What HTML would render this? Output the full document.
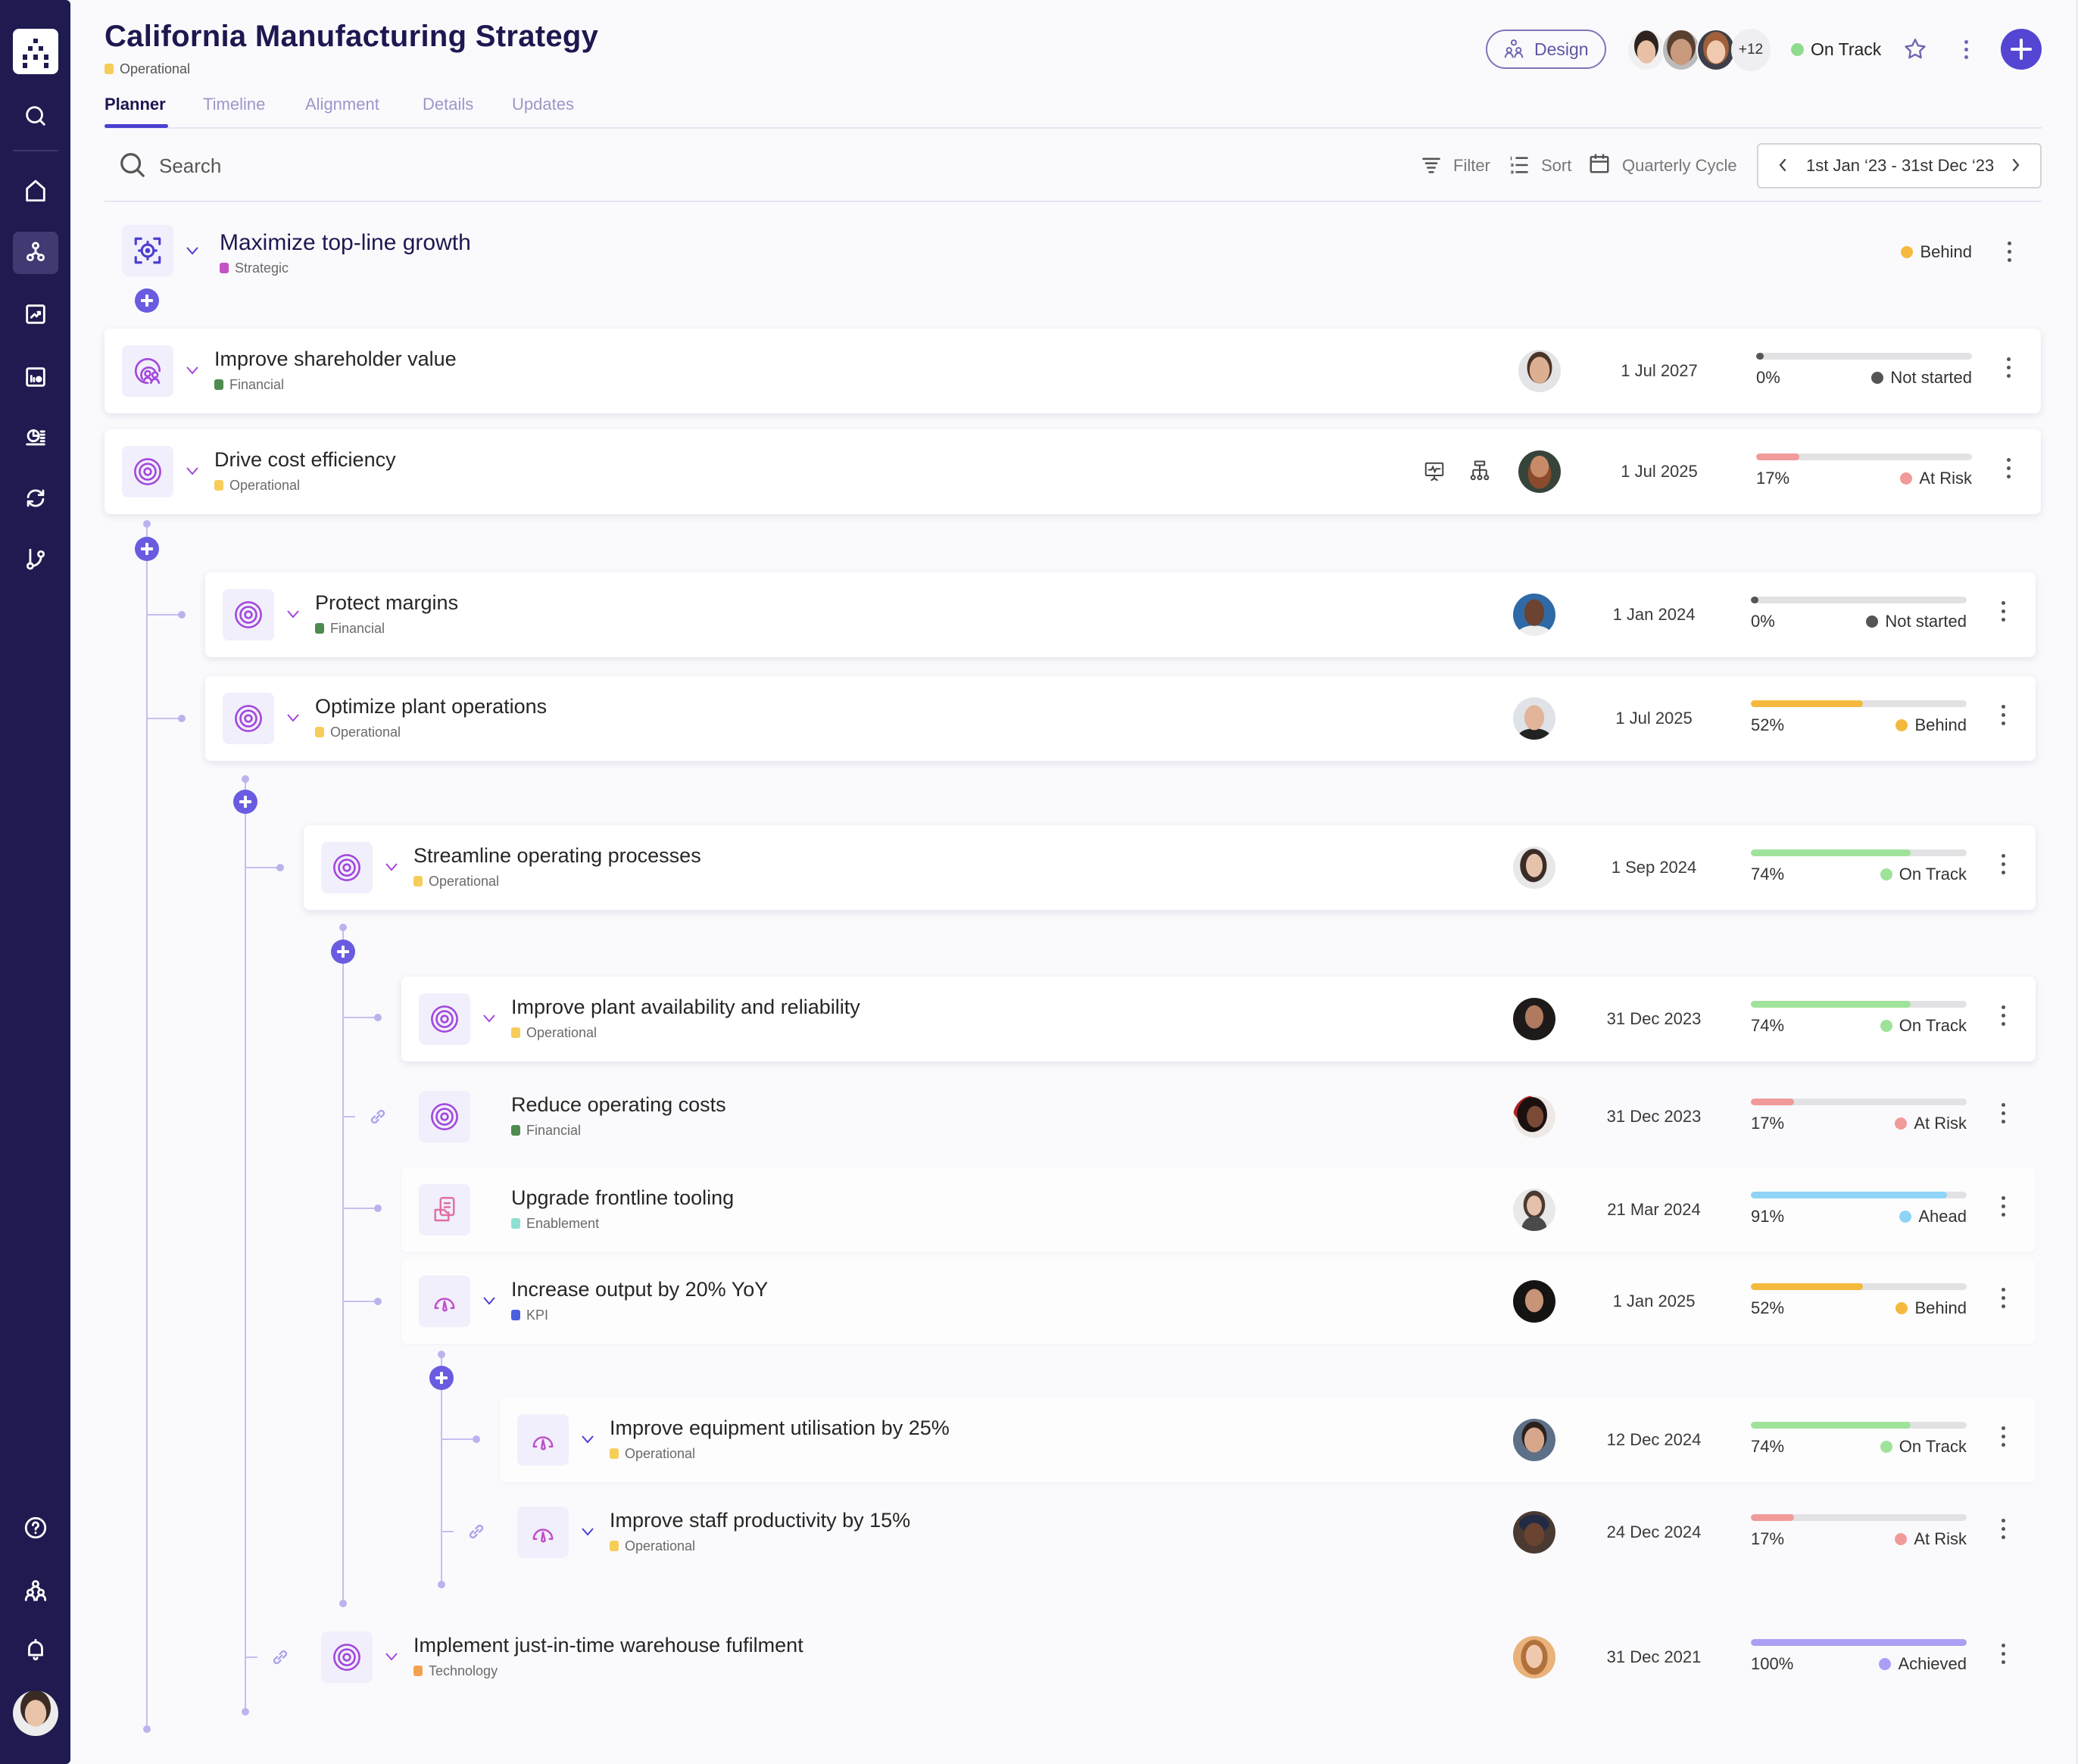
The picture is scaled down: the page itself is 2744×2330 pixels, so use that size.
<!DOCTYPE html>
<html><head><meta charset="utf-8">
<style>
*{box-sizing:border-box;margin:0;padding:0}
body{width:2744px;height:2330px;background:#fafafd;font-family:"Liberation Sans",sans-serif;position:relative;overflow:hidden;color:#2b2b2b}
.abs{position:absolute}
.side{position:absolute;left:0;top:0;width:93px;height:2330px;background:#1f1a4f;border-radius:0 6px 6px 0}
.side svg{position:absolute;left:30px;width:34px;height:34px;fill:none;stroke:#fff;stroke-width:2;stroke-linecap:round;stroke-linejoin:round}
.title{left:138px;top:26px;font-size:40px;font-weight:bold;color:#1d1850;letter-spacing:0.3px}
.tagm{display:inline-block;width:12px;height:14px;border-radius:3px;margin-right:8px;vertical-align:-1px}
.tab{top:125px;font-size:22px;color:#9b97c9}
.row{position:absolute;height:112px}
.card{background:#fff;border-radius:8px;box-shadow:0 3px 10px rgba(30,20,80,.10)}
.faint{background:#fdfdfe;border-radius:8px;box-shadow:0 1px 4px rgba(30,20,80,.04)}
.ib{position:absolute;left:23px;top:22px;width:68px;height:68px;background:#f1effc;border-radius:8px}
.ib svg{position:absolute;left:13px;top:13px;width:42px;height:42px;fill:none;stroke-linecap:round;stroke-linejoin:round}
.chev{position:absolute;left:105px;top:47px;width:22px;height:16px}
.rt{position:absolute;left:145px;top:25px;font-size:27px;color:#262626;white-space:nowrap}
.rg{position:absolute;left:145px;top:64px;font-size:18px;color:#6a6a6a;white-space:nowrap}
.av{position:absolute;top:28px;width:56px;height:56px;border-radius:50%}
.dt{position:absolute;top:43px;width:180px;text-align:center;font-size:22px;color:#3a3a3a}
.pg{position:absolute;top:32px;width:285px;height:60px}
.bar{position:absolute;left:0;top:0;width:285px;height:9px;border-radius:5px;background:#e2e2e4;overflow:hidden}
.bar i{display:block;height:9px;border-radius:5px}
.pc{position:absolute;left:0;top:20px;font-size:22px;color:#333}
.st{position:absolute;right:0;top:20px;font-size:22px;color:#333;white-space:nowrap}
.st b{display:inline-block;width:16px;height:16px;border-radius:50%;margin-right:9px;vertical-align:-1px}
.dots{position:absolute;top:38px;width:8px;height:36px}
.dots i{display:block;width:5px;height:5px;border-radius:50%;background:#555;margin:0 0 6px 1px}
.vl{position:absolute;width:2px;background:#c4bff0}
.hl{position:absolute;height:2px;background:#c4bff0}
.nd{position:absolute;width:10px;height:10px;border-radius:50%;background:#b9b3ee}
.plus{position:absolute;width:32px;height:32px;border-radius:50%;background:#6a5ce0}
.plus:before,.plus:after{content:"";position:absolute;background:#fff;border-radius:1px}
.plus:before{left:8px;top:14px;width:16px;height:4px}
.plus:after{left:14px;top:8px;width:4px;height:16px}
.lk{position:absolute;width:28px;height:28px;fill:none;stroke:#a9a2ea;stroke-width:2;stroke-linecap:round}
</style></head><body>

<div class="side">
  <div class="abs" style="left:17px;top:38px;width:60px;height:60px;background:#fff;border-radius:8px"></div>
  <div class="abs" style="left:44px;top:51px;width:6px;height:6px;background:#1f1a4f"></div>
  <div class="abs" style="left:37px;top:61px;width:6px;height:6px;background:#1f1a4f"></div>
  <div class="abs" style="left:51px;top:61px;width:6px;height:6px;background:#1f1a4f"></div>
  <div class="abs" style="left:30px;top:72px;width:6px;height:7px;background:#1f1a4f"></div>
  <div class="abs" style="left:44px;top:72px;width:6px;height:7px;background:#1f1a4f"></div>
  <div class="abs" style="left:58px;top:72px;width:6px;height:7px;background:#1f1a4f"></div>
  <div class="abs" style="left:30px;top:83px;width:6px;height:7px;background:#1f1a4f"></div>
  <div class="abs" style="left:58px;top:83px;width:6px;height:7px;background:#1f1a4f"></div>
  <div class="abs" style="left:17px;top:198px;width:60px;height:2px;background:#3b3670"></div>
  <div class="abs" style="left:17px;top:306px;width:60px;height:56px;background:#403a73;border-radius:8px"></div>
  <svg style="top:136px" viewBox="0 0 24 24"><circle cx="11" cy="11" r="7"/><path d="M16 16l4 4"/></svg>
  <svg style="top:235px" viewBox="0 0 24 24"><path d="M4 21V10l8-7 8 7v11z"/></svg>
  <svg style="top:316px" viewBox="0 0 24 24"><circle cx="12" cy="6" r="2.5"/><circle cx="7" cy="17" r="2.5"/><circle cx="17" cy="17" r="2.5"/><path d="M12 8.5v4M12 12.5l-4 2.5M12 12.5l4 2.5"/></svg>
  <svg style="top:398px" viewBox="0 0 24 24"><rect x="4" y="4" width="16" height="16" rx="1.5"/><path d="M8 15l3-3 2 2 3-4M14 10h2v2"/></svg>
  <svg style="top:481px" viewBox="0 0 24 24"><rect x="4" y="4" width="16" height="16" rx="1.5"/><path d="M8 11v5M10.5 13v3"/><circle cx="15" cy="14" r="2" fill="#fff"/></svg>
  <svg style="top:560px" viewBox="0 0 24 24"><circle cx="10" cy="11" r="5"/><path d="M10 6v5h5M17 7h3M17 10h3M17 13h3M17 16h3M4 19h16"/></svg>
  <svg style="top:641px" viewBox="0 0 24 24"><path d="M5 11a7 7 0 0 1 12-4l2 2M19 13a7 7 0 0 1-12 4l-2-2M19 5v4h-4M5 19v-4h4"/></svg>
  <svg style="top:722px" viewBox="0 0 24 24"><path d="M7 3v13"/><circle cx="7" cy="18" r="2.5"/><circle cx="17" cy="7" r="2.5"/><path d="M17 9.5c0 5-4 8-7.5 8.5"/></svg>
  <svg style="top:2001px" viewBox="0 0 24 24"><circle cx="12" cy="12" r="9"/><path d="M9.5 9.5a2.5 2.5 0 1 1 3.5 2.3c-.7.4-1 .8-1 1.7M12 16.5v.3"/></svg>
  <svg style="top:2085px" viewBox="0 0 24 24"><circle cx="12" cy="5" r="2.5"/><circle cx="7" cy="13" r="2.5"/><circle cx="17" cy="13" r="2.5"/><path d="M3 20c0-3 2-4.5 4-4.5s4 1.5 4 4.5M13 20c0-3 2-4.5 4-4.5s4 1.5 4 4.5M8 10.5c1-2 2.5-3 4-3s3 1 4 3"/></svg>
  <svg style="top:2162px" viewBox="0 0 24 24"><path d="M6 17V11a6 6 0 0 1 12 0v6H6zM12 5V3M10.5 19.5a1.5 1.5 0 0 0 3 0"/></svg>
  <div class="abs" style="left:17px;top:2233px;width:60px;height:60px;border-radius:50%;background:radial-gradient(ellipse 24% 30% at 50% 50%,#e9c3a8 96%,transparent 100%),radial-gradient(ellipse 34% 40% at 50% 38%,#3a2a24 96%,transparent 100%),#ececec"></div>
</div>

<div class="abs title">California Manufacturing Strategy</div>
<div class="abs" style="left:138px;top:81px;font-size:18px;color:#555"><span class="tagm" style="background:#f7cd5a"></span>Operational</div>
<div class="abs tab" style="left:138px;color:#1d1850;font-weight:bold">Planner</div>
<div class="abs tab" style="left:268px">Timeline</div>
<div class="abs tab" style="left:403px">Alignment</div>
<div class="abs tab" style="left:558px">Details</div>
<div class="abs tab" style="left:676px">Updates</div>
<div class="abs" style="left:138px;top:168px;width:2558px;height:2px;background:#e6e4f2"></div>
<div class="abs" style="left:138px;top:164px;width:84px;height:5px;background:#4b3fd0;border-radius:3px"></div>

<div class="abs" style="left:1962px;top:39px;width:159px;height:52px;border:2px solid #7d76b8;border-radius:26px"></div>
<svg class="abs" style="left:1984px;top:50px;width:30px;height:30px;fill:none;stroke:#6e67b0;stroke-width:1.6" viewBox="0 0 24 24"><circle cx="12" cy="5" r="2.5"/><circle cx="7" cy="13" r="2.5"/><circle cx="17" cy="13" r="2.5"/><path d="M3 21c0-3 2-5 4-5s4 2 4 5M13 21c0-3 2-5 4-5s4 2 4 5"/></svg>
<div class="abs" style="left:2026px;top:52px;font-size:23px;color:#5d56a0">Design</div>
<div class="abs" style="left:2148px;top:38px;width:52px;height:56px;border-radius:50%;background:radial-gradient(ellipse 26% 30% at 50% 55%,#e7c0a6 96%,transparent 100%),radial-gradient(ellipse 34% 40% at 50% 40%,#2d221d 96%,transparent 100%),#f0f0f0;border:2px solid #fafafd"></div>
<div class="abs" style="left:2194px;top:38px;width:52px;height:56px;border-radius:50%;background:radial-gradient(ellipse 30% 34% at 50% 55%,#c99a7e 96%,transparent 100%),radial-gradient(ellipse 40% 44% at 50% 42%,#5a4030 96%,transparent 100%),#bbb;border:2px solid #fafafd"></div>
<div class="abs" style="left:2240px;top:38px;width:52px;height:56px;border-radius:50%;background:radial-gradient(ellipse 26% 30% at 50% 55%,#f0c9b0 96%,transparent 100%),radial-gradient(ellipse 36% 42% at 50% 45%,#a0603a 96%,transparent 100%),#3c3f4a;border:2px solid #fafafd"></div>
<div class="abs" style="left:2286px;top:38px;width:52px;height:56px;border-radius:50%;background:#efeff2;font-size:19px;color:#333;text-align:center;line-height:56px">+12</div>
<div class="abs" style="left:2365px;top:57px;width:17px;height:17px;border-radius:50%;background:#8fdc8f"></div>
<div class="abs" style="left:2391px;top:52px;font-size:23px;color:#222">On Track</div>
<svg class="abs" style="left:2512px;top:48px;width:34px;height:34px;fill:none;stroke:#6e67b0;stroke-width:1.7;stroke-linejoin:round" viewBox="0 0 24 24"><path d="M12 3l2.7 5.6 6.1.9-4.4 4.3 1 6.1L12 17l-5.4 2.9 1-6.1-4.4-4.3 6.1-.9z"/></svg>
<div class="abs" style="left:2594px;top:53px"><div style="width:5px;height:5px;border-radius:50%;background:#6e67b0;margin-bottom:5px"></div><div style="width:5px;height:5px;border-radius:50%;background:#6e67b0;margin-bottom:5px"></div><div style="width:5px;height:5px;border-radius:50%;background:#6e67b0"></div></div>
<div class="abs" style="left:2642px;top:38px;width:54px;height:54px;border-radius:50%;background:#5446d3"></div>
<div class="abs" style="left:2655px;top:63px;width:28px;height:4px;background:#fff;border-radius:2px"></div>
<div class="abs" style="left:2667px;top:51px;width:4px;height:28px;background:#fff;border-radius:2px"></div>

<svg class="abs" style="left:156px;top:198px;width:38px;height:40px;fill:none;stroke:#555;stroke-width:2" viewBox="0 0 24 24"><circle cx="10.5" cy="10.5" r="7.5"/><path d="M16 16l5 5" stroke-linecap="round"/></svg>
<div class="abs" style="left:210px;top:204px;font-size:26px;color:#555">Search</div>
<svg class="abs" style="left:1876px;top:204px;width:28px;height:28px;fill:none;stroke:#555;stroke-width:2.2;stroke-linecap:round" viewBox="0 0 24 24"><path d="M3 5h18M6 10h12M8 15h8M10 20h4"/></svg>
<div class="abs" style="left:1919px;top:206px;font-size:22px;color:#777">Filter</div>
<svg class="abs" style="left:1992px;top:203px;width:28px;height:30px;fill:none;stroke:#555;stroke-width:2.2;stroke-linecap:round" viewBox="0 0 24 24"><path d="M9 4h12M9 12h12M9 20h12" /><path d="M3 3v3M3 11h2v2H3M3 19h2v2H3" stroke-width="1.2"/></svg>
<div class="abs" style="left:2035px;top:206px;font-size:22px;color:#777">Sort</div>
<svg class="abs" style="left:2097px;top:200px;width:30px;height:32px;fill:none;stroke:#555;stroke-width:2" viewBox="0 0 24 24"><rect x="3" y="5" width="18" height="16" rx="1"/><path d="M3 10h18M8 2v5M16 2v5"/></svg>
<div class="abs" style="left:2142px;top:206px;font-size:22px;color:#777">Quarterly Cycle</div>
<div class="abs" style="left:2320px;top:189px;width:376px;height:60px;border:2px solid #d4d4d8;border-radius:6px;background:#fff"></div>
<svg class="abs" style="left:2344px;top:206px;width:20px;height:24px;fill:none;stroke:#444;stroke-width:2.2;stroke-linecap:round" viewBox="0 0 12 24"><path d="M9 5l-6 7 6 7"/></svg>
<div class="abs" style="left:2385px;top:206px;font-size:22px;color:#333">1st Jan ‘23 - 31st Dec ‘23</div>
<svg class="abs" style="left:2652px;top:206px;width:20px;height:24px;fill:none;stroke:#444;stroke-width:2.2;stroke-linecap:round" viewBox="0 0 12 24"><path d="M3 5l6 7-6 7"/></svg>
<div class="abs" style="left:138px;top:265px;width:2558px;height:2px;background:#e6e4f2"></div>

<div class="vl" style="left:193px;top:691px;height:1593px"></div><div class="nd" style="left:189px;top:2279px"></div><div class="nd" style="left:189px;top:687px"></div>
<div class="vl" style="left:323px;top:1029px;height:1232px"></div><div class="nd" style="left:319px;top:2256px"></div><div class="nd" style="left:319px;top:1024px"></div>
<div class="vl" style="left:452px;top:1225px;height:893px"></div><div class="nd" style="left:448px;top:2113px"></div><div class="nd" style="left:448px;top:1220px"></div>
<div class="vl" style="left:582px;top:1789px;height:304px"></div><div class="nd" style="left:578px;top:2088px"></div><div class="nd" style="left:578px;top:1784px"></div>
<div class="plus" style="left:178px;top:381px"></div>
<div class="plus" style="left:178px;top:709px"></div>
<div class="plus" style="left:308px;top:1043px"></div>
<div class="plus" style="left:437px;top:1241px"></div>
<div class="plus" style="left:567px;top:1804px"></div>
<div class="hl" style="left:194px;top:811px;width:45px"></div><div class="nd" style="left:235px;top:807px"></div>
<div class="hl" style="left:194px;top:948px;width:45px"></div><div class="nd" style="left:235px;top:944px"></div>
<div class="hl" style="left:324px;top:1145px;width:45px"></div><div class="nd" style="left:365px;top:1141px"></div>
<div class="hl" style="left:453px;top:1343px;width:45px"></div><div class="nd" style="left:494px;top:1339px"></div>
<div class="hl" style="left:453px;top:1474px;width:16px"></div>
<svg class="lk" style="left:485px;top:1461px" viewBox="0 0 24 24"><path d="M10 14l4-4M8.5 11.5l-3 3a3 3 0 0 0 4 4l3-3M15.5 12.5l3-3a3 3 0 0 0-4-4l-3 3"/></svg>
<div class="hl" style="left:453px;top:1595px;width:45px"></div><div class="nd" style="left:494px;top:1591px"></div>
<div class="hl" style="left:453px;top:1718px;width:45px"></div><div class="nd" style="left:494px;top:1714px"></div>
<div class="hl" style="left:583px;top:1900px;width:45px"></div><div class="nd" style="left:624px;top:1896px"></div>
<div class="hl" style="left:583px;top:2022px;width:16px"></div>
<svg class="lk" style="left:615px;top:2009px" viewBox="0 0 24 24"><path d="M10 14l4-4M8.5 11.5l-3 3a3 3 0 0 0 4 4l3-3M15.5 12.5l3-3a3 3 0 0 0-4-4l-3 3"/></svg>
<div class="hl" style="left:324px;top:2188px;width:16px"></div>
<svg class="lk" style="left:356px;top:2175px" viewBox="0 0 24 24"><path d="M10 14l4-4M8.5 11.5l-3 3a3 3 0 0 0 4 4l3-3M15.5 12.5l3-3a3 3 0 0 0-4-4l-3 3"/></svg>

<div class="row" style="left:138px;top:275px;width:2557px">
  <div class="ib"><svg viewBox="0 0 24 24" stroke="#4b3fd0" stroke-width="1.8"><path d="M3 7V3h4M17 3h4v4M21 17v4h-4M7 21H3v-4"/><circle cx="12" cy="12" r="4.5"/><circle cx="12" cy="12" r="1" fill="#4b3fd0"/><path d="M12 5.5v2M12 16.5v2M5.5 12h2M16.5 12h2"/></svg></div>
  <svg class="chev" style="top:48px" viewBox="0 0 22 16" fill="none" stroke="#4b3fd0" stroke-width="2"><path d="M4 4l7 8 7-8"/></svg>
  <div class="rt" style="left:152px;top:29px;font-size:30px;color:#1d1850">Maximize top-line growth</div>
  <div class="rg" style="left:152px;top:69px"><span class="tagm" style="background:#c553c6"></span>Strategic</div>
  <div class="st" style="right:91px;top:45px;font-size:22px;color:#333"><b style="background:#f4b93d"></b>Behind</div>
  <div class="dots" style="right:37px;top:44px"><i></i><i></i><i></i></div>
</div>

<div class="row card" style="left:138px;top:434px;width:2557px">
  <div class="ib"><svg viewBox="0 0 24 24" stroke="#a347dc" stroke-width="1.5"><path d="M12 21a9 9 0 1 1 9-9"/><path d="M8 18a5.5 5.5 0 1 1 9.5-6"/><circle cx="12" cy="14" r="2"/><circle cx="17.5" cy="15" r="2"/><path d="M9 20c.5-2 1.5-3 3-3s2.5 1 3 3M14.5 21c.5-2 1.5-3 3-3s2.5 1 3 3"/></svg></div>
  <svg class="chev" viewBox="0 0 22 16" fill="none" stroke="#a347dc" stroke-width="2"><path d="M4 4l7 8 7-8"/></svg>
  <div class="rt">Improve shareholder value</div>
  <div class="rg"><span class="tagm" style="background:#4f8a4f"></span>Financial</div>
  <div class="av" style="right:634px;background:radial-gradient(ellipse 24% 32% at 50% 48%,#dcae92 96%,transparent 100%),radial-gradient(ellipse 30% 38% at 50% 42%,#4a3428 96%,transparent 100%),#e4e4e6"></div>
  <div class="dt" style="right:414px">1 Jul 2027</div>
  <div class="pg" style="right:91px"><div class="bar"><i style="width:10px;background:#555"></i></div><div class="pc">0%</div><div class="st"><b style="background:#555"></b>Not started</div></div>
  <div class="dots" style="right:38px"><i></i><i></i><i></i></div>
</div>

<div class="row card" style="left:138px;top:567px;width:2557px">
  <div class="ib"><svg viewBox="0 0 24 24" stroke="#a347dc" stroke-width="1.5"><circle cx="12" cy="12" r="9.5"/><circle cx="12" cy="12" r="6"/><circle cx="12" cy="12" r="2.5"/></svg></div>
  <svg class="chev" viewBox="0 0 22 16" fill="none" stroke="#a347dc" stroke-width="2"><path d="M4 4l7 8 7-8"/></svg>
  <div class="rt">Drive cost efficiency</div>
  <div class="rg"><span class="tagm" style="background:#f7cd5a"></span>Operational</div>
  <svg class="abs" style="right:786px;top:40px;width:30px;height:32px;fill:none;stroke:#444;stroke-width:1.6;stroke-linecap:round" viewBox="0 0 24 24"><rect x="3" y="3" width="18" height="13" rx="1"/><path d="M6 10h3l1.5-3 2 5 1.5-3h4M12 16v3M9 21l3-2 3 2"/></svg>
  <svg class="abs" style="right:726px;top:38px;width:30px;height:34px;fill:none;stroke:#444;stroke-width:1.6" viewBox="0 0 24 24"><rect x="7" y="2" width="10" height="4" rx=".5"/><path d="M12 6v5M5 11h14M5 11v6M12 11v6M19 11v6"/><circle cx="5" cy="19" r="2"/><circle cx="12" cy="19" r="2"/><circle cx="19" cy="19" r="2"/></svg>
  <div class="av" style="right:634px;background:radial-gradient(ellipse 22% 26% at 50% 38%,#c88b6a 96%,transparent 100%),radial-gradient(ellipse 28% 36% at 50% 55%,#8a4a2c 96%,transparent 100%),#36443a"></div>
  <div class="dt" style="right:414px">1 Jul 2025</div>
  <div class="pg" style="right:91px"><div class="bar"><i style="width:57px;background:#f19a9a"></i></div><div class="pc">17%</div><div class="st"><b style="background:#f19a9a"></b>At Risk</div></div>
  <div class="dots" style="right:38px"><i></i><i></i><i></i></div>
</div>

<div class="row card" style="left:271px;top:756px;width:2417px">
  <div class="ib"><svg viewBox="0 0 24 24" stroke="#a347dc" stroke-width="1.5"><circle cx="12" cy="12" r="9.5"/><circle cx="12" cy="12" r="6"/><circle cx="12" cy="12" r="2.5"/></svg></div>
  <svg class="chev" viewBox="0 0 22 16" fill="none" stroke="#a347dc" stroke-width="2"><path d="M4 4l7 8 7-8"/></svg>
  <div class="rt">Protect margins</div>
  <div class="rg"><span class="tagm" style="background:#4f8a4f"></span>Financial</div>
  <div class="av" style="right:634px;background:radial-gradient(ellipse 24% 32% at 50% 45%,#6b4330 96%,transparent 100%),radial-gradient(ellipse 40% 20% at 50% 95%,#eee 96%,transparent 100%),#2f6aa6"></div>
  <div class="dt" style="right:414px">1 Jan 2024</div>
  <div class="pg" style="right:91px"><div class="bar"><i style="width:10px;background:#555"></i></div><div class="pc">0%</div><div class="st"><b style="background:#555"></b>Not started</div></div>
  <div class="dots" style="right:38px"><i></i><i></i><i></i></div>
</div>

<div class="row card" style="left:271px;top:893px;width:2417px">
  <div class="ib"><svg viewBox="0 0 24 24" stroke="#a347dc" stroke-width="1.5"><circle cx="12" cy="12" r="9.5"/><circle cx="12" cy="12" r="6"/><circle cx="12" cy="12" r="2.5"/></svg></div>
  <svg class="chev" viewBox="0 0 22 16" fill="none" stroke="#a347dc" stroke-width="2"><path d="M4 4l7 8 7-8"/></svg>
  <div class="rt">Optimize plant operations</div>
  <div class="rg"><span class="tagm" style="background:#f7cd5a"></span>Operational</div>
  <div class="av" style="right:634px;background:radial-gradient(ellipse 24% 30% at 50% 48%,#e2b49a 96%,transparent 100%),radial-gradient(ellipse 40% 22% at 50% 95%,#222 96%,transparent 100%),#dfe3e8"></div>
  <div class="dt" style="right:414px">1 Jul 2025</div>
  <div class="pg" style="right:91px"><div class="bar"><i style="width:148px;background:#f4b93d"></i></div><div class="pc">52%</div><div class="st"><b style="background:#f4b93d"></b>Behind</div></div>
  <div class="dots" style="right:38px"><i></i><i></i><i></i></div>
</div>

<div class="row card" style="left:401px;top:1090px;width:2287px">
  <div class="ib"><svg viewBox="0 0 24 24" stroke="#a347dc" stroke-width="1.5"><circle cx="12" cy="12" r="9.5"/><circle cx="12" cy="12" r="6"/><circle cx="12" cy="12" r="2.5"/></svg></div>
  <svg class="chev" viewBox="0 0 22 16" fill="none" stroke="#a347dc" stroke-width="2"><path d="M4 4l7 8 7-8"/></svg>
  <div class="rt">Streamline operating processes</div>
  <div class="rg"><span class="tagm" style="background:#f7cd5a"></span>Operational</div>
  <div class="av" style="right:634px;background:radial-gradient(ellipse 20% 28% at 50% 45%,#e6c2aa 96%,transparent 100%),radial-gradient(ellipse 32% 40% at 48% 45%,#3a2c26 96%,transparent 100%),#e8e8e8"></div>
  <div class="dt" style="right:414px">1 Sep 2024</div>
  <div class="pg" style="right:91px"><div class="bar"><i style="width:211px;background:#9fe29a"></i></div><div class="pc">74%</div><div class="st"><b style="background:#9fe29a"></b>On Track</div></div>
  <div class="dots" style="right:38px"><i></i><i></i><i></i></div>
</div>

<div class="row card" style="left:530px;top:1290px;width:2158px">
  <div class="ib"><svg viewBox="0 0 24 24" stroke="#a347dc" stroke-width="1.5"><circle cx="12" cy="12" r="9.5"/><circle cx="12" cy="12" r="6"/><circle cx="12" cy="12" r="2.5"/></svg></div>
  <svg class="chev" viewBox="0 0 22 16" fill="none" stroke="#a347dc" stroke-width="2"><path d="M4 4l7 8 7-8"/></svg>
  <div class="rt">Improve plant availability and reliability</div>
  <div class="rg"><span class="tagm" style="background:#f7cd5a"></span>Operational</div>
  <div class="av" style="right:634px;background:radial-gradient(ellipse 22% 28% at 50% 45%,#b07a5e 96%,transparent 100%),#1e1a1a"></div>
  <div class="dt" style="right:414px">31 Dec 2023</div>
  <div class="pg" style="right:91px"><div class="bar"><i style="width:211px;background:#9fe29a"></i></div><div class="pc">74%</div><div class="st"><b style="background:#9fe29a"></b>On Track</div></div>
  <div class="dots" style="right:38px"><i></i><i></i><i></i></div>
</div>

<div class="row" style="left:530px;top:1419px;width:2158px">
  <div class="ib"><svg viewBox="0 0 24 24" stroke="#a347dc" stroke-width="1.5"><circle cx="12" cy="12" r="9.5"/><circle cx="12" cy="12" r="6"/><circle cx="12" cy="12" r="2.5"/></svg></div>
  <div class="rt">Reduce operating costs</div>
  <div class="rg"><span class="tagm" style="background:#4f8a4f"></span>Financial</div>
  <div class="av" style="right:634px;background:radial-gradient(ellipse 20% 26% at 52% 50%,#7a4a36 96%,transparent 100%),radial-gradient(ellipse 36% 42% at 45% 45%,#1a1010 96%,transparent 100%),radial-gradient(circle at 30% 30%,#b02020 0 30%,transparent 32%),#efe9e6"></div>
  <div class="dt" style="right:414px">31 Dec 2023</div>
  <div class="pg" style="right:91px"><div class="bar"><i style="width:57px;background:#f19a9a"></i></div><div class="pc">17%</div><div class="st"><b style="background:#f19a9a"></b>At Risk</div></div>
  <div class="dots" style="right:38px"><i></i><i></i><i></i></div>
</div>

<div class="row faint" style="left:530px;top:1542px;width:2158px">
  <div class="ib"><svg viewBox="0 0 24 24" stroke="#e06fa0" stroke-width="1.4"><rect x="9" y="3" width="10" height="13" rx="1.5"/><path d="M12 7h4M12 10h4"/><path d="M5 12h7l1.5 2H15v6H5z"/></svg></div>
  <div class="rt">Upgrade frontline tooling</div>
  <div class="rg"><span class="tagm" style="background:#8de0d2"></span>Enablement</div>
  <div class="av" style="right:634px;background:radial-gradient(ellipse 18% 24% at 50% 40%,#e5c0aa 96%,transparent 100%),radial-gradient(ellipse 30% 30% at 50% 95%,#4a4a4a 96%,transparent 100%),radial-gradient(ellipse 26% 34% at 50% 38%,#4a3a30 96%,transparent 100%),#e9e9e9"></div>
  <div class="dt" style="right:414px">21 Mar 2024</div>
  <div class="pg" style="right:91px"><div class="bar"><i style="width:259px;background:#8fd3f6"></i></div><div class="pc">91%</div><div class="st"><b style="background:#8fd3f6"></b>Ahead</div></div>
  <div class="dots" style="right:38px"><i></i><i></i><i></i></div>
</div>

<div class="row faint" style="left:530px;top:1663px;width:2158px">
  <div class="ib"><svg viewBox="0 0 24 24" stroke="#c04fc9" stroke-width="1.4"><path d="M5 17a7 7 0 1 1 14 0h-2M5 17h2"/><path d="M11 18l1-6 1.5 6a1.3 1.3 0 0 1-2.5 0z"/></svg></div>
  <svg class="chev" viewBox="0 0 22 16" fill="none" stroke="#4b3fd0" stroke-width="2"><path d="M4 4l7 8 7-8"/></svg>
  <div class="rt">Increase output by 20% YoY</div>
  <div class="rg"><span class="tagm" style="background:#4b5fe0"></span>KPI</div>
  <div class="av" style="right:634px;background:radial-gradient(ellipse 22% 28% at 50% 48%,#c79478 96%,transparent 100%),#161313"></div>
  <div class="dt" style="right:414px">1 Jan 2025</div>
  <div class="pg" style="right:91px"><div class="bar"><i style="width:148px;background:#f4b93d"></i></div><div class="pc">52%</div><div class="st"><b style="background:#f4b93d"></b>Behind</div></div>
  <div class="dots" style="right:38px"><i></i><i></i><i></i></div>
</div>

<div class="row faint" style="left:660px;top:1846px;width:2028px">
  <div class="ib"><svg viewBox="0 0 24 24" stroke="#c04fc9" stroke-width="1.4"><path d="M5 17a7 7 0 1 1 14 0h-2M5 17h2"/><path d="M11 18l1-6 1.5 6a1.3 1.3 0 0 1-2.5 0z"/></svg></div>
  <svg class="chev" viewBox="0 0 22 16" fill="none" stroke="#4b3fd0" stroke-width="2"><path d="M4 4l7 8 7-8"/></svg>
  <div class="rt">Improve equipment utilisation by 25%</div>
  <div class="rg"><span class="tagm" style="background:#f7cd5a"></span>Operational</div>
  <div class="av" style="right:634px;background:radial-gradient(ellipse 24% 30% at 50% 50%,#d7a78c 96%,transparent 100%),radial-gradient(ellipse 30% 36% at 50% 42%,#2a201c 96%,transparent 100%),#5d7088"></div>
  <div class="dt" style="right:414px">12 Dec 2024</div>
  <div class="pg" style="right:91px"><div class="bar"><i style="width:211px;background:#9fe29a"></i></div><div class="pc">74%</div><div class="st"><b style="background:#9fe29a"></b>On Track</div></div>
  <div class="dots" style="right:38px"><i></i><i></i><i></i></div>
</div>

<div class="row" style="left:660px;top:1968px;width:2028px">
  <div class="ib"><svg viewBox="0 0 24 24" stroke="#c04fc9" stroke-width="1.4"><path d="M5 17a7 7 0 1 1 14 0h-2M5 17h2"/><path d="M11 18l1-6 1.5 6a1.3 1.3 0 0 1-2.5 0z"/></svg></div>
  <svg class="chev" viewBox="0 0 22 16" fill="none" stroke="#4b3fd0" stroke-width="2"><path d="M4 4l7 8 7-8"/></svg>
  <div class="rt">Improve staff productivity by 15%</div>
  <div class="rg"><span class="tagm" style="background:#f7cd5a"></span>Operational</div>
  <div class="av" style="right:634px;background:radial-gradient(ellipse 24% 28% at 50% 55%,#6a4430 96%,transparent 100%),radial-gradient(ellipse 36% 22% at 50% 30%,#222a44 96%,transparent 100%),#4a3a32"></div>
  <div class="dt" style="right:414px">24 Dec 2024</div>
  <div class="pg" style="right:91px"><div class="bar"><i style="width:57px;background:#f19a9a"></i></div><div class="pc">17%</div><div class="st"><b style="background:#f19a9a"></b>At Risk</div></div>
  <div class="dots" style="right:38px"><i></i><i></i><i></i></div>
</div>

<div class="row" style="left:401px;top:2133px;width:2287px">
  <div class="ib"><svg viewBox="0 0 24 24" stroke="#a347dc" stroke-width="1.5"><circle cx="12" cy="12" r="9.5"/><circle cx="12" cy="12" r="6"/><circle cx="12" cy="12" r="2.5"/></svg></div>
  <svg class="chev" viewBox="0 0 22 16" fill="none" stroke="#a347dc" stroke-width="2"><path d="M4 4l7 8 7-8"/></svg>
  <div class="rt">Implement just-in-time warehouse fufilment</div>
  <div class="rg"><span class="tagm" style="background:#f3a04f"></span>Technology</div>
  <div class="av" style="right:634px;background:radial-gradient(ellipse 20% 28% at 50% 48%,#f0c8ae 96%,transparent 100%),radial-gradient(ellipse 32% 42% at 50% 50%,#b0703a 96%,transparent 100%),#e9b27a"></div>
  <div class="dt" style="right:414px">31 Dec 2021</div>
  <div class="pg" style="right:91px"><div class="bar"><i style="width:285px;background:#a99ff5"></i></div><div class="pc">100%</div><div class="st"><b style="background:#a99ff5"></b>Achieved</div></div>
  <div class="dots" style="right:38px"><i></i><i></i><i></i></div>
</div>

<div class="abs" style="left:2741px;top:0;width:3px;height:2330px;background:#eeeef0"></div>
</body></html>
